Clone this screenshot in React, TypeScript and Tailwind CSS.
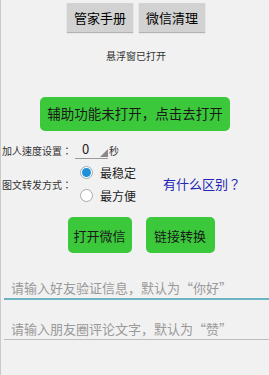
import React from 'react';

const font = { fontFamily: '"Noto Sans CJK SC", "Liberation Sans", sans-serif' };
const tc = { fontFamily: '"Noto Sans CJK TC", "Noto Sans CJK SC", sans-serif' };

export default function App() {
  return (
    <div
      className="w-[269px] h-[375px] bg-[#f1f1f1] border-l border-[#c9c9c9] overflow-hidden text-[#222]"
      style={font}
    >
      {/* top buttons */}
      <div className="flex justify-center gap-[6px] pt-[3px] pl-[2px]">
        <button className="w-[66px] h-[29px] bg-[#d2d2d2] text-[13px] text-black shadow-[0_1px_1px_rgba(0,0,0,0.25)] leading-none">
          管家手册
        </button>
        <button className="w-[66px] h-[29px] bg-[#d2d2d2] text-[13px] text-black shadow-[0_1px_1px_rgba(0,0,0,0.25)] leading-none">
          微信清理
        </button>
      </div>

      <div className="text-center text-[10px] text-[#333] mt-[17px] pl-[2px] leading-[14px]">悬浮窗已打开</div>

      <div className="flex justify-center mt-[34px]">
        <button className="w-[190px] h-[34px] rounded-[5px] bg-[#3bc83b] text-[13.5px] text-[#1a1a1a] leading-none">
          辅助功能未打开，点击去打开
        </button>
      </div>

      {/* speed */}
      <div className="flex items-center mt-[9px] h-[20px]">
        <span className="text-[10px] pl-[1px] text-[#333]" style={tc}>加人速度设置：</span>
        <div className="relative ml-[3px] w-[33px] h-[18px] border-b border-[#999]">
          <span className="absolute left-[7px] top-[0px] text-[13px] leading-[16px]">0</span>
          <svg className="absolute right-0 bottom-[1px]" width="8" height="8" viewBox="0 0 8 8">
            <polygon points="8,0 8,8 0,8" fill="#8a8a8a" />
          </svg>
        </div>
        <span className="text-[10px] ml-[1px] text-[#333]">秒</span>
      </div>

      {/* radio group */}
      <div className="flex mt-[1px]">
        <div className="flex items-center">
          <span className="text-[10px] pl-[1px] text-[#333]" style={tc}>图文转发方式：</span>
        </div>
        <div className="flex flex-col ml-[8px]">
          <label className="flex items-center h-[23px]">
            <span className="w-[13px] h-[13px] rounded-full border border-[#9ab] bg-white flex items-center justify-center">
              <span className="w-[9px] h-[9px] rounded-full bg-[#1f8fd8]" />
            </span>
            <span className="text-[12px] ml-[7px] text-[#222]">最稳定</span>
          </label>
          <label className="flex items-center h-[23px]">
            <span className="w-[13px] h-[13px] rounded-full border border-[#aaa] bg-white" />
            <span className="text-[12px] ml-[7px] text-[#222]">最方便</span>
          </label>
        </div>
        <div className="flex items-center ml-[27px]">
          <span className="text-[13px] text-[#2424b8]" style={tc}>有什么区别？</span>
        </div>
      </div>

      {/* buttons */}
      <div className="flex justify-center gap-[14px] mt-[10px] pl-[12px]">
        <button className="w-[64px] h-[36px] rounded-[5px] bg-[#3bc83b] text-[13px] text-[#1a1a1a] leading-none">
          打开微信
        </button>
        <button className="w-[69px] h-[36px] rounded-[5px] bg-[#3bc83b] text-[13px] text-[#1a1a1a] leading-none">
          链接转换
        </button>
      </div>

      {/* inputs */}
      <div className="mt-[23px] ml-[3px] border-b-2 border-[#6cb4c4] h-[24px] flex items-end pb-[1px]">
        <span className="text-[13px] text-[#9a9a9a] pl-[7px] leading-[18px]">请输入好友验证信息，默认为“你好”</span>
      </div>
      <div className="mt-[17px] ml-[3px] border-b border-[#bdbdbd] h-[23px] flex items-end pb-[1px]">
        <span className="text-[13px] text-[#9a9a9a] pl-[7px] leading-[18px]">请输入朋友圈评论文字，默认为“赞”</span>
      </div>
    </div>
  );
}
